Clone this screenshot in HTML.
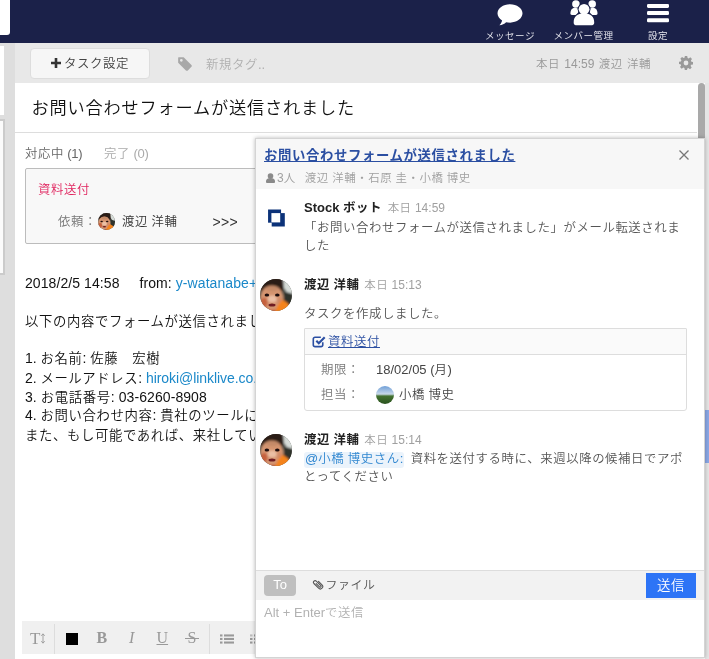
<!DOCTYPE html>
<html lang="ja">
<head>
<meta charset="utf-8">
<title>Stock</title>
<style>
*{box-sizing:border-box;margin:0;padding:0}
html,body{width:709px;height:659px;overflow:hidden;background:#fff}
body{will-change:transform;font-family:"Liberation Sans","Noto Sans CJK JP",sans-serif;color:#222;position:relative;font-size:13px}
.abs{position:absolute}
.t{position:absolute;white-space:nowrap;line-height:1;font-weight:350}
#hdr{left:0;top:0;width:709px;height:43px;background:#1b2149}
#search{left:-6px;top:-4px;width:16px;height:39px;background:#fff;border-radius:3px}
.nav{color:#eeeef4;font-size:10px;text-align:center}
#left1{left:0;top:43px;width:15px;height:616px;background:#dedede}
#left2{left:0;top:46px;width:4px;height:69px;background:#fff}
#left3{left:-3px;top:119px;width:8px;height:156px;background:#fbfbfb;border:2px solid #cbcbcb}
#tool{left:15px;top:43px;width:694px;height:40px;background:#e8e8e8}
#btn{left:30px;top:48px;width:120px;height:31px;background:#f6f6f6;border:1px solid #ddd;border-radius:4px}
#main{left:15px;top:83px;width:682px;height:576px;background:#fff}
#rstrip{left:697px;top:83px;width:12px;height:576px;background:#e8e8e8}
#sbtrack{left:697px;top:83px;width:8px;height:576px;background:#fff}
#thumb{left:698px;top:83px;width:7px;height:70px;background:#a9a9a9;border-radius:4px}
#rs2{left:705px;top:83px;width:4px;height:576px;background:#e5e5e5}
#bluebar{left:705px;top:410px;width:4px;height:53px;background:#8aa8e6}
#tline{left:15px;top:132px;width:682px;height:1px;background:#ddd}
#taskbox{left:25px;top:168px;width:300px;height:76px;background:#f8f8f8;border:1px solid #bcbcbc;border-radius:2px}
.body{font-size:14px;color:#111}
.lnk{color:#1a88c9}
#etool{left:22px;top:621px;width:300px;height:33px;background:#f0f0f0}
#pop{left:255px;top:138px;width:450px;height:520px;background:#fff;border:1px solid #d4d4d4;box-shadow:0 0 4px rgba(0,0,0,.28)}
#phead{left:0;top:0;width:448px;height:50px;background:#f7f7f7}
#pfoot{left:0;top:431px;width:448px;height:30px;background:#f2f2f2;border-top:1px solid #ddd}
#tobtn{font-weight:350;left:264px;top:575px;width:32px;height:21px;background:#bfbfbf;border-radius:4px;color:#fff;font-size:13px;text-align:center;line-height:19.500px}
#send{font-weight:350;left:646px;top:573px;width:50px;height:25px;background:#2d74f6;color:#fff;font-size:14px;text-align:center;line-height:25px}
#tbox{left:304px;top:328px;width:383px;height:83px;border:1px solid #ddd;border-radius:1px 1px 3px 3px;background:linear-gradient(#fafafa 0,#fafafa 26px,#fff 26px)}
#tboxl{left:305px;top:354px;width:381px;height:1px;background:#ddd}
.g{color:#a0a0a0}
.m{font-size:13px;color:#555}
.j{font-size:.955em;letter-spacing:.047em}
</style>
</head>
<body>
<div class="abs" id="hdr"></div>
<div class="abs" id="search"></div>

<!-- nav icons -->
<svg class="abs" style="left:494.500px;top:2.300px" width="30" height="27.800" viewBox="0 0 30 26" preserveAspectRatio="none"><path fill="#fff" d="M15 2C8 2 2.5 5.8 2.5 10.6c0 2.700 1.800 5.100 4.600 6.700-.4 1.700-1.300 3.200-2.700 4.400 2.700-.2 5-1.200 6.700-2.800 1.200.3 2.500.4 3.900.4 6.900 0 12.500-3.900 12.500-8.700S21.900 2 15 2z"/></svg>
<div class="t nav" style="left:480px;top:31px;width:60px"><span class="j">メッセージ</span></div>
<svg class="abs" style="left:568px;top:0" width="32" height="27" viewBox="568 0 32 27"><g fill="#fff"><circle cx="575.900" cy="3.900" r="3.750"/><circle cx="592.200" cy="3.900" r="3.750"/><path d="M570.400 13.500c0-3.300 1.700-5.700 4.600-5.700 2 0 3.600 1 4.400 2.700l-3 4.400h-4.500c-1 0-1.500-.6-1.500-1.400z"/><path d="M597.500 13.500c0-3.300-1.700-5.700-4.600-5.700-2 0-3.600 1-4.400 2.700l3 4.400h4.500c1 0 1.500-.6 1.500-1.400z"/><circle cx="584.060" cy="9.300" r="6.400" fill="#1b2149"/><path d="M572.700 22.500c0-6 4-10.400 11.300-10.400s11.300 4.400 11.300 10.400v1.500c0 1.200-1 2.200-2.200 2.200h-18.200c-1.200 0-2.200-1-2.200-2.200z" fill="#1b2149"/><circle cx="584.060" cy="9.300" r="5.400"/><path d="M573.700 22.300c0-5.300 3.500-9 10.300-9s10.200 3.700 10.200 9v.8c0 1.200-1 2.100-2.100 2.100h-16.300c-1.200 0-2.100-1-2.100-2.100z"/></g></svg>
<div class="t nav" style="left:548.500px;top:31px;width:70px"><span class="j">メンバー管理</span></div>
<svg class="abs" style="left:646px;top:3px" width="24" height="21" viewBox="646 3 24 21"><g fill="#fff"><rect x="647" y="4" width="22" height="3.900" rx="1.300"/><rect x="647" y="11.100" width="22" height="3.900" rx="1.300"/><rect x="647" y="18.300" width="22" height="3.900" rx="1.300"/></g></svg>
<div class="t nav" style="left:638px;top:31px;width:40px"><span class="j">設定</span></div>

<div class="abs" id="left1"></div>
<div class="abs" id="left2"></div>
<div class="abs" id="left3"></div>
<div class="abs" id="tool"></div>
<div class="abs" id="btn"></div>
<svg class="abs" style="left:51px;top:58px" width="10" height="10" viewBox="0 0 10 10"><path fill="#333" d="M3.700 0h2.600v3.700H10v2.600H6.300V10H3.700V6.300H0V3.700h3.700z"/></svg>
<div class="t" id="btntxt" style="left:64px;top:56.600px;font-size:13px;color:#444"><span class="j">タスク設定</span></div>
<svg class="abs" style="left:177.300px;top:55.800px" width="16" height="16" viewBox="0 0 14 14"><path fill="#a8a8a8" d="M1 1.500v4.300l6.800 6.800c.5.500 1.200.5 1.700 0l3.100-3.100c.5-.5.500-1.200 0-1.700L5.800 1H1.500C1.200 1 1 1.200 1 1.500zM3.800 5a1.200 1.200 0 1 1 0-2.400 1.200 1.200 0 0 1 0 2.400z"/></svg>
<div class="t" id="newtag" style="left:206px;top:57.600px;font-size:13px;color:#b0b0b0"><span class="j">新規タグ</span>..</div>
<div class="t" id="meta" style="left:536px;top:58px;font-size:12px;color:#999;word-spacing:1px"><span class="j">本日</span> 14:59 <span class="j">渡辺</span> <span class="j">洋輔</span></div>
<svg class="abs" style="left:679px;top:56px" width="14" height="14" viewBox="0 0 14 14"><path fill="#999" fill-rule="evenodd" d="M5.800 0h2.400l.4 1.900 1.100.5L11.300 1.300 13 3l-1.100 1.600.5 1.100L14 6v2.400l-1.900.4-.5 1.100 1.100 1.600-1.700 1.700-1.600-1.100-1.100.5L8 14H5.800l-.4-1.900-1.100-.5-1.600 1.100L1 11l1.100-1.600-.5-1.100L0 8V5.800l1.900-.4.500-1.100L1.300 2.700 3 1l1.600 1.100 1.100-.5zM7 4.600a2.400 2.400 0 1 0 0 4.800 2.400 2.400 0 0 0 0-4.800z"/></svg>

<div class="abs" id="main"></div>
<div class="abs" id="rstrip"></div>
<div class="abs" id="sbtrack"></div>
<div class="abs" id="rs2"></div>
<div class="abs" id="bluebar"></div>
<div class="abs" id="thumb"></div>
<div class="abs" id="tline"></div>
<div class="t" id="title" style="left:31.500px;top:98.500px;font-size:18px;color:#111"><span class="j">お問い合わせフォームが送信されました</span></div>

<div class="t" id="tab1" style="left:25px;top:147px;font-size:13px;color:#666;letter-spacing:-0.300px"><span class="j">対応中</span> (1)</div>
<div class="t" id="tab2" style="left:104px;top:147px;font-size:13px;color:#aaa;letter-spacing:-0.200px"><span class="j">完了</span> (0)</div>
<div class="abs" id="taskbox"></div>
<div class="t" id="tk1" style="left:38px;top:183px;font-size:13px;color:#e0245e"><span class="j">資料送付</span></div>
<div class="t" id="tk2" style="left:58px;top:215px;font-size:13px;color:#777"><span class="j">依頼：</span></div>
<svg class="abs" style="left:98px;top:213px" width="17" height="17" viewBox="0 0 32 32"><use href="#av1"/></svg>
<div class="t" id="tk3" style="left:122px;top:215px;font-size:13px;color:#333"><span class="j">渡辺</span> <span class="j">洋輔</span></div>
<div class="t" id="tk4" style="left:212.500px;top:215px;font-size:14px;color:#333;letter-spacing:0.300px">&gt;&gt;&gt;</div>

<div class="t body" id="b1" style="left:25px;top:276px;letter-spacing:0.080px">2018/2/5 14:58</div>
<div class="t body" id="b1b" style="left:139.500px;top:276px;letter-spacing:0.080px">from: <span class="lnk">y-watanabe+info@linklive.co.jp</span></div>
<div class="t body" id="b2" style="left:25px;top:314px"><span class="j">以下の内容でフォームが送信されました。</span></div>
<div class="t body" id="b3" style="left:25px;top:351px">1. <span class="j">お名前</span>: <span class="j">佐藤　宏樹</span></div>
<div class="t body" id="b4" style="left:25px;top:371px;letter-spacing:-0.060px">2. <span class="j">メールアドレス</span>: <span class="lnk">hiroki@linklive.co.jp</span></div>
<div class="t body" id="b5" style="left:25px;top:390px;letter-spacing:0.080px">3. <span class="j">お電話番号</span>: 03-6260-8908</div>
<div class="t body" id="b6" style="left:25px;top:408px">4. <span class="j">お問い合わせ内容</span>: <span class="j">貴社のツールに興味があります。</span></div>
<div class="t body" id="b7" style="left:25px;top:428px"><span class="j">また、もし可能であれば、来社していただけますか。</span></div>

<div class="abs" id="etool"></div>
<div class="t" style="left:30px;top:630px;font-family:'Liberation Serif',serif;font-size:17px;color:#999">T<svg style="display:inline-block;vertical-align:baseline;margin-left:0.500px" width="4" height="11" viewBox="0 0 4 11"><path d="M2 1v9M0.300 2.800L2 0.800l1.700 2M0.300 8.200L2 10.200l1.700-2" fill="none" stroke="#999" stroke-width="0.900"/></svg></div>
<div class="abs" style="left:54px;top:624px;width:1px;height:30px;background:#ddd"></div>
<div class="abs" style="left:66px;top:633px;width:12px;height:12px;background:#000"></div>
<div class="t" style="left:96.500px;top:630px;font-family:'Liberation Serif',serif;font-size:16px;font-weight:bold;color:#999">B</div>
<div class="t" style="left:129px;top:630px;font-family:'Liberation Serif',serif;font-size:16px;font-style:italic;color:#999">I</div>
<div class="t" style="left:156.500px;top:630px;font-family:'Liberation Serif',serif;font-size:16px;text-decoration:underline;color:#999">U</div>
<div class="t" style="left:187.500px;top:630px;font-family:'Liberation Serif',serif;font-size:16px;color:#999">S</div><div class="abs" style="left:185px;top:638px;width:14px;height:1px;background:#999"></div>
<div class="abs" style="left:209px;top:624px;width:1px;height:30px;background:#ddd"></div>
<svg class="abs" style="left:220px;top:633.500px" width="14" height="10" viewBox="0 0 14 12" preserveAspectRatio="none"><g fill="#999"><rect x="0" y="0.500" width="2.500" height="2.500"/><rect x="4" y="0.500" width="10" height="2.500"/><rect x="0" y="4.700" width="2.500" height="2.500"/><rect x="4" y="4.700" width="10" height="2.500"/><rect x="0" y="9" width="2.500" height="2.500"/><rect x="4" y="9" width="10" height="2.500"/></g></svg>
<svg class="abs" style="left:250px;top:633.500px" width="14" height="10" viewBox="0 0 14 12" preserveAspectRatio="none"><g fill="#999"><rect x="0" y="0.500" width="2.500" height="2.500" opacity="0.600"/><rect x="4" y="0.500" width="10" height="2.500"/><rect x="0" y="4.700" width="2.500" height="2.500"/><rect x="4" y="4.700" width="10" height="2.500"/><rect x="0" y="9" width="2.500" height="2.500"/><rect x="4" y="9" width="10" height="2.500"/></g></svg>

<!-- popup -->
<div class="abs" id="pop">
  <div class="abs" id="phead"></div>
  <div class="abs" id="pfoot"></div>
</div>
<div class="t" id="ptitle" style="left:264px;top:148px;font-size:14px;font-weight:bold;color:#2b4fa2;text-decoration:underline"><span class="j">お問い合わせフォームが送信されました</span></div>
<svg class="abs" style="left:678px;top:149px" width="12" height="12" viewBox="0 0 12 12"><path d="M1.500 1.500l9 9M10.500 1.500l-9 9" stroke="#777" stroke-width="1.300" fill="none"/></svg>
<svg class="abs" style="left:266px;top:173px" width="9" height="10" viewBox="0 0 10 11"><g fill="#8a8a8a"><circle cx="5" cy="3.200" r="3.100"/><path d="M0 9.500C0 6.800 1.500 5.500 5 5.500s5 1.300 5 4v.5c0 .6-.4 1-1 1H1c-.6 0-1-.4-1-1z"/></g></svg>
<div class="t g" id="psub" style="left:277px;top:172px;font-size:12px">3<span class="j">人</span> &nbsp;<span style="margin-left:2.500px"><span class="j">渡辺</span> <span class="j">洋輔・石原</span> <span class="j">圭・小橋</span> <span class="j">博史</span></span></div>

<svg class="abs" style="left:266px;top:207px" width="20" height="22" viewBox="0 0 20 22"><rect x="5.700" y="6.100" width="13.100" height="13.400" fill="#0c3279"/><rect x="2.060" y="2.500" width="13" height="13.200" fill="#0c3279"/><rect x="5.400" y="6.100" width="8.800" height="9.300" fill="#fff"/></svg>
<div class="t" id="m1n" style="left:304px;top:201px;font-size:13px;font-weight:bold;color:#222">Stock <span class="j">ボット</span> <span class="g" style="font-weight:350;font-size:12px;margin-left:2px"><span class="j">本日</span> 14:59</span></div>
<div class="t m" id="m1a" style="left:304px;top:220.500px"><span class="j">「お問い合わせフォームが送信されました」がメール転送されま</span></div>
<div class="t m" id="m1b" style="left:304px;top:238.500px"><span class="j">した</span></div>

<svg width="0" height="0" style="position:absolute"><defs>
<radialGradient id="gface" cx="50%" cy="45%" r="50%"><stop offset="0" stop-color="#e9b9a0"/><stop offset="0.700" stop-color="#d49a80"/><stop offset="1" stop-color="#9a6a55"/></radialGradient>
<filter id="bl" x="-20%" y="-20%" width="140%" height="140%"><feGaussianBlur stdDeviation="1.300"/></filter><filter id="bl3" x="-50%" y="-50%" width="200%" height="200%"><feGaussianBlur stdDeviation="0.550"/></filter><filter id="bl2" x="-50%" y="-50%" width="200%" height="200%"><feGaussianBlur stdDeviation="0.500"/></filter><clipPath id="cc"><circle cx="16" cy="16" r="16"/></clipPath>
<g id="av1" clip-path="url(#cc)"><rect width="32" height="32" fill="#4a4c46"/><g filter="url(#bl)"><path d="M21 -2h13v17l-6 0-5-7z" fill="#d6dcd8"/><path d="M24 12.500l8 2v10l-4 3-4-5z" fill="#2e312c"/><path d="M-2 -2h25l1 14h-26z" fill="#2b1c14"/><ellipse cx="11.800" cy="19" rx="11.600" ry="12.500" fill="#d49470"/><ellipse cx="12.500" cy="9.500" rx="6" ry="2.500" fill="#c48a68"/><ellipse cx="12.200" cy="20" rx="4.500" ry="3.500" fill="#ebbfa4"/><ellipse cx="4" cy="23.500" rx="3.500" ry="4.500" fill="#c6603c"/><ellipse cx="19.500" cy="21.500" rx="2.500" ry="3" fill="#d28a68"/><path d="M14 34l4-8 4.500-5.500 5 3.500 3 4-3 8z" fill="#f4831f"/><path d="M3 34l1-5.500 5 2.500 7 0-1 3z" fill="#c8501c"/></g><g filter="url(#bl3)"><ellipse cx="6.900" cy="15.900" rx="2.300" ry="1.500" fill="#1c0e0a"/><ellipse cx="17.300" cy="15.900" rx="2.300" ry="1.500" fill="#1c0e0a"/><ellipse cx="12" cy="26" rx="3.500" ry="1.500" fill="#701f20"/></g></g>
<linearGradient id="gsky" x1="0" y1="0" x2="0" y2="1"><stop offset="0" stop-color="#6f9fd8"/><stop offset="0.450" stop-color="#c8d8e8"/><stop offset="0.560" stop-color="#44722f"/><stop offset="1" stop-color="#2a5220"/></linearGradient>
</defs></svg>

<svg class="abs" style="left:260px;top:279px" width="32" height="32" viewBox="0 0 32 32"><use href="#av1"/></svg>
<div class="t" id="m2n" style="left:304px;top:278px;font-size:13px;font-weight:bold;color:#222"><span class="j">渡辺</span> <span class="j">洋輔</span> <span class="g" style="font-weight:350;font-size:12px;margin-left:1px"><span class="j">本日</span> 15:13</span></div>
<div class="t m" id="m2a" style="left:304px;top:307px"><span class="j">タスクを作成しました。</span></div>
<div class="abs" id="tbox"></div>
<div class="abs" id="tboxl"></div>
<svg class="abs" style="left:312.300px;top:334.700px" width="14" height="13" viewBox="0 0 13 12"><path d="M10 6.800v2.400a1.600 1.600 0 0 1-1.600 1.600H2.800a1.600 1.600 0 0 1-1.600-1.600V3.600A1.600 1.600 0 0 1 2.800 2h5.400" fill="none" stroke="#2b4fa2" stroke-width="1.500"/><path d="M4 5.300l2.300 2.300 5.500-5.500" fill="none" stroke="#2b4fa2" stroke-width="2"/></svg>
<div class="t" id="tl" style="left:328px;top:335px;font-size:13px;color:#2b4fa2;text-decoration:underline"><span class="j">資料送付</span></div>
<div class="t" id="r1a" style="left:321px;top:363px;font-size:13px;color:#777"><span class="j">期限：</span></div>
<div class="t" id="r1b" style="left:376px;top:363px;font-size:13px;color:#444">18/02/05 (<span class="j">月</span>)</div>
<div class="t" id="r2a" style="left:321px;top:387.600px;font-size:13px;color:#777"><span class="j">担当：</span></div>
<svg class="abs" style="left:376px;top:386px" width="18" height="18" viewBox="0 0 18 18"><circle cx="9" cy="9" r="9" fill="url(#gsky)"/></svg>
<div class="t" id="r2b" style="left:399px;top:388px;font-size:13px;color:#444"><span class="j">小橋</span> <span class="j">博史</span></div>

<svg class="abs" style="left:260px;top:434px" width="32" height="32" viewBox="0 0 32 32"><use href="#av1"/></svg>
<div class="t" id="m3n" style="left:304px;top:433px;font-size:13px;font-weight:bold;color:#222"><span class="j">渡辺</span> <span class="j">洋輔</span> <span class="g" style="font-weight:350;font-size:12px;margin-left:1px"><span class="j">本日</span> 15:14</span></div>
<div class="abs" style="left:304px;top:451.500px;width:100px;height:16px;background:#ebf3fb;border-radius:3px"></div>
<div class="t m" id="m3a" style="left:305px;top:452px"><span style="color:#2f86d0">@<span class="j">小橋</span> <span class="j">博史さん</span>:</span>&nbsp; <span class="j">資料を送付する時に、来週以降の候補日でアポ</span></div>
<div class="t m" id="m3b" style="left:304px;top:470px"><span class="j">とってください</span></div>

<div class="abs" id="tobtn">To</div>
<svg class="abs" style="left:312px;top:579px" width="12" height="12" viewBox="0 0 12 12"><path d="M4.200 4.600l3.300 3.300a.9.900 0 0 0 1.300-1.300L4.300 2.100a1.700 1.700 0 0 0-2.400 2.400l4.700 4.700a2.400 2.400 0 0 0 3.400-3.400L6.500 2.300" fill="none" stroke="#555" stroke-width="1.100" stroke-linecap="round"/></svg>
<div class="t" id="file" style="left:325.500px;top:578.500px;font-size:12.500px;color:#555;letter-spacing:-0.500px"><span class="j">ファイル</span></div>
<div class="abs" id="send"><span class="j">送信</span></div>
<div class="t" id="ph" style="left:264px;top:606px;font-size:13px;color:#b2b2b2">Alt + Enter<span class="j">で送信</span></div>
</body>
</html>
